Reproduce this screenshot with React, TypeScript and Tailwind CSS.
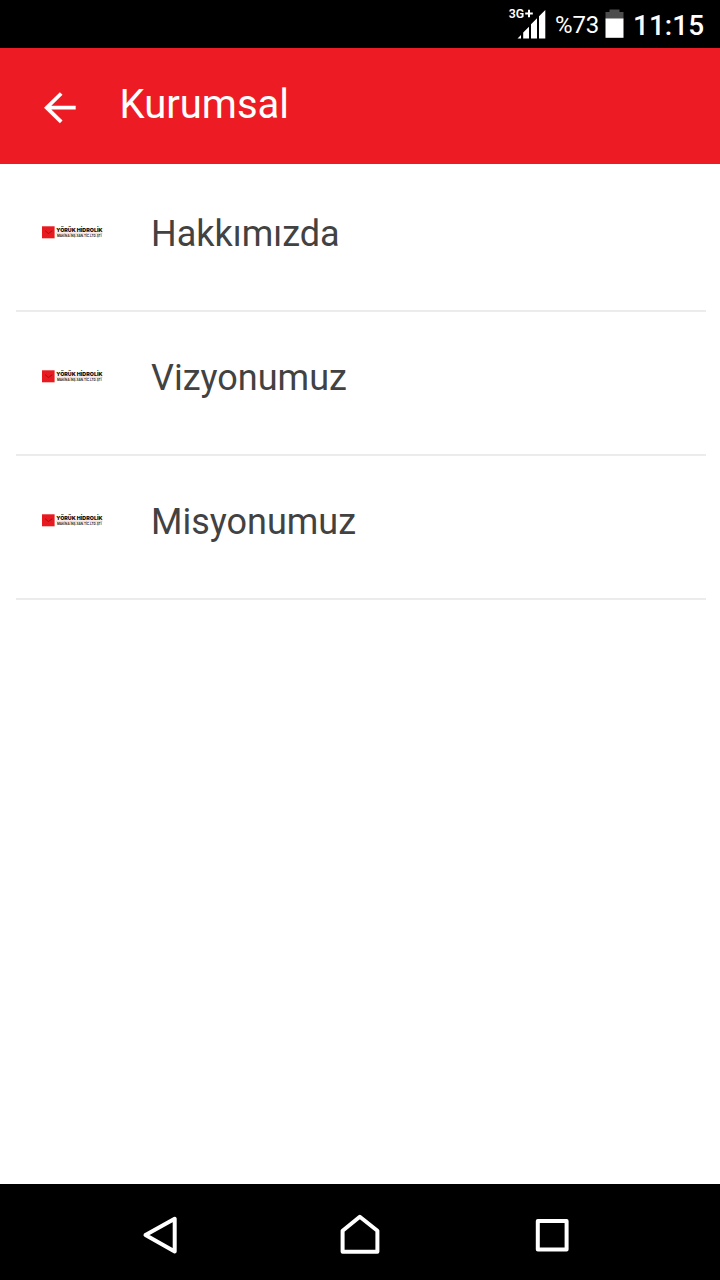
const items = ["Hakkımızda", "Vizyonumuz", "Misyonumuz"];

function BrandLogo() {
  return (
    <svg width="72" height="28" viewBox="36 218 72 28" className="shrink-0 overflow-visible" aria-hidden="true">
      <rect x="42" y="226.3" width="12.6" height="12" fill="#e8191f" />
      <path d="M45 230.500l3.400 3 4-2.800" fill="none" stroke="#8e1418" strokeWidth="0.9" />
      <text x="56.3" y="232" textLength="46.2" lengthAdjust="spacingAndGlyphs" fontFamily="Inter, sans-serif" fontWeight="900" fontSize="5.4" fill="#111111">YÖRÜK HİDROLİK</text>
      <rect x="56" y="232.800" width="46.5" height="0.6" fill="#e9a5a5" />
      <text x="57" y="237" textLength="44.5" lengthAdjust="spacingAndGlyphs" fontFamily="Inter, sans-serif" fontWeight="700" fontSize="3.8" fill="#2a2a2a">MAKİNA İNŞ.SAN.TİC.LTD.ŞTİ</text>
    </svg>
  );
}

function StatusBar() {
  return (
    <div className="flex h-12 shrink-0 items-center justify-end bg-black pr-4 text-white">
      <svg width="40" height="48" viewBox="507 0 40 48" aria-hidden="true">
        <text x="508.8" y="18" fontFamily="Roboto, sans-serif" fontWeight="600" fontSize="12.3" fill="#fff">3G</text>
        <path d="M525.200 13.500h7.600M529 9.700v7.600" stroke="#fff" strokeWidth="2" />
        <path d="M517.500 38.500l3.500-3.600v3.600zM523.200 38.500v-6l5.800-5.800v11.800zM531 38.500v-14.200l6-6.100v20.300zM539 38.500v-22.300l6.300-6.200v28.500z" fill="#fff" />
      </svg>
      <span className="ml-2 w-[45px] whitespace-nowrap pt-[2px] text-[24px] leading-[50px] tracking-[-0.2px]">%73</span>
      <svg width="20" height="48" viewBox="605 0 20 48" className="ml-[5px]" aria-hidden="true">
        <path d="M605.500 12h4V9.500h10V12h4v7h-18z" fill="#4d4d4d" />
        <rect x="605.5" y="18.500" width="18" height="19.300" fill="#fff" />
      </svg>
      <span className="ml-2 w-[71px] whitespace-nowrap pt-[3px] text-[28px] font-medium leading-[50px]">11:15</span>
    </div>
  );
}

export default function App() {
  return (
    <div className="flex h-[1280px] w-[720px] flex-col overflow-hidden bg-white font-['Roboto',sans-serif]">
      <StatusBar />
      <header className="flex h-[116px] shrink-0 items-start bg-[#ed1c24] pl-[42px] text-white">
        <svg width="36" height="36" viewBox="42 90 36 36" className="mt-[42px]" fill="none" stroke="#fff" strokeWidth="3.8" aria-label="Geri">
          <path d="M61.200 93.500L46.700 107.700l14.500 14.200M45.700 107.700h30" />
        </svg>
        <h1 className="ml-[41.5px] mt-[33px] text-[40px] font-normal leading-[48px]">Kurumsal</h1>
      </header>
      <main className="flex-1 pl-4 pr-[14px] pt-1">
        <ul>
          {items.map((label) => (
            <li key={label} className="flex h-36 border-b-2 border-[#ececec] pl-5">
              <div className="mt-[50px]">
                <BrandLogo />
              </div>
              <span className="ml-[43px] mt-[42px] text-[36px] leading-[48px] text-[#424242]">{label}</span>
            </li>
          ))}
        </ul>
      </main>
      <nav className="flex h-24 shrink-0 justify-between bg-black pl-[140px] pr-[148px]">
        <button aria-label="Geri">
          <svg width="40" height="96" viewBox="140 1184 40 96" fill="none" stroke="#fff" strokeWidth="4" strokeLinejoin="round">
            <path d="M174.700 1218.800v32.800l-29.200-16.600z" />
          </svg>
        </button>
        <button className="ml-2" aria-label="Ana ekran">
          <svg width="44" height="96" viewBox="338 1184 44 96" fill="none" stroke="#fff" strokeWidth="4" strokeLinejoin="round">
            <path d="M342.600 1251.800v-21l17.200-14 17.600 14v21z" />
          </svg>
        </button>
        <button aria-label="Son uygulamalar">
          <svg width="40" height="96" viewBox="532 1184 40 96" fill="none" stroke="#fff" strokeWidth="4" strokeLinejoin="round">
            <path d="M537.800 1221h28.800v28.500h-28.800z" />
          </svg>
        </button>
      </nav>
    </div>
  );
}
